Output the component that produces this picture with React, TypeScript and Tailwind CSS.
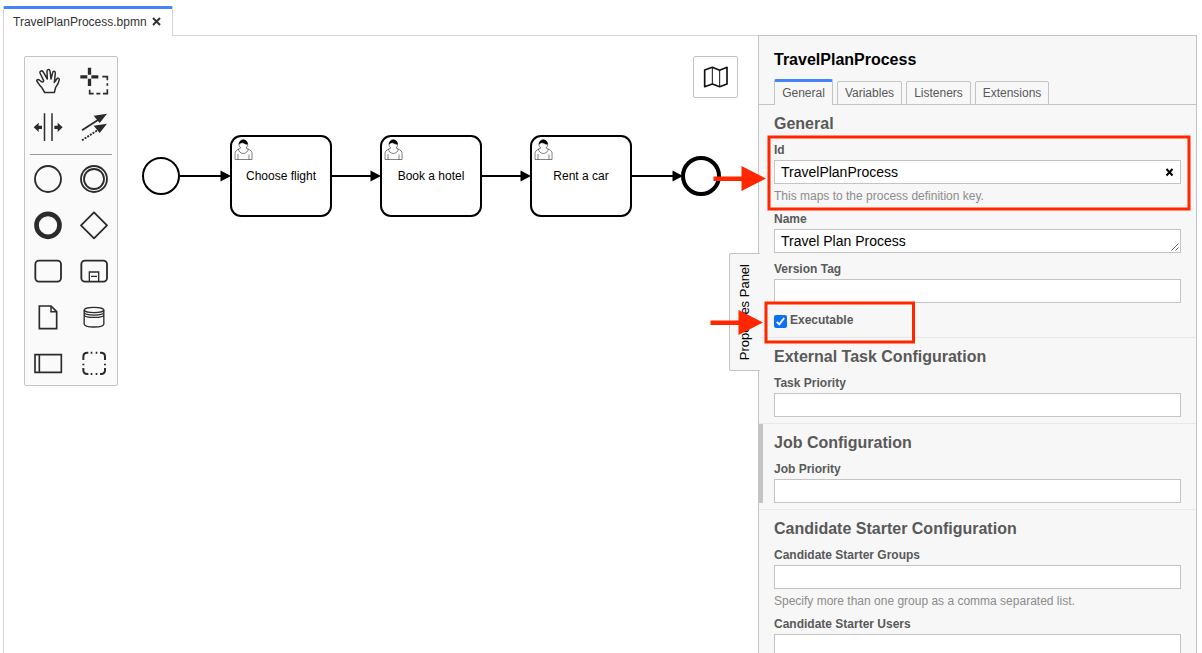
import type { ReactNode } from "react";

const INK = "#2b2b2b";

function Tool({ box, children }: { box: string; children: ReactNode }) {
  return (
    <button className="block size-[46px]">
      <svg className="size-[46px]" viewBox={box} fill="none" stroke={INK} strokeWidth="5.5">
        {children}
      </svg>
    </button>
  );
}

function Palette() {
  return (
    <div className="absolute left-5 top-5 h-[330px] w-[94px] overflow-hidden rounded-xs border border-[#c4c4c4] bg-[#fafafa] pt-[2px]">
      <div className="grid grid-cols-2">
        <Tool box="15 27 138 138">
          <path
            strokeWidth="4.5"
            strokeLinejoin="round"
            d="M74 127.500H103L107 112C113 104 117 95 118 89C118 83 112 83 110 88L103 97L106 69C106 62 99 62 98 68L93 87L90 63C89 56 81 57 81 64L82 87L69 65C65 60 58 64 60 69L71 92C69 99 65 96 58 90C53 87 48 90 51 94C56 100 58 107 65 112Z"
          />
        </Tool>
        <Tool box="153 27 138 138">
          <path strokeWidth="10" d="M181 80.500H202M214 80.500H235M208.500 53V74M208.500 86V108" />
          <path strokeWidth="5" d="M247 80H262V91M262 100V107M262 118V131H249M241 131H229M221 131H209V119" />
        </Tool>
        <Tool box="15 165 138 138">
          <path strokeWidth="4.5" d="M73.500 190V273M96 190V273" />
          <path fill={INK} stroke="none" d="M41 232L56 218V227H66V237H56V246ZM128 232L113 218V227H103V237H113V246Z" />
        </Tool>
        <Tool box="153 165 138 138">
          <path strokeWidth="5.5" d="M186 241L235 209" />
          <path strokeWidth="5.5" strokeDasharray="6 3.500" d="M186 271L235 239" />
          <path fill={INK} stroke="none" d="M261 191L221 197L239 219ZM261 221L221 227L239 249Z" />
        </Tool>
      </div>
      <hr className="mx-[5px] mb-px mt-[3px] border-[#999]" />
      <div className="grid grid-cols-2">
        <Tool box="15 3 138 138">
          <circle cx="84" cy="72" r="39" />
        </Tool>
        <Tool box="153 3 138 138">
          <circle cx="222" cy="72" r="39" />
          <circle cx="222" cy="72" r="30" />
        </Tool>
        <Tool box="15 141 138 138">
          <circle cx="84" cy="211" r="34.500" strokeWidth="14" />
        </Tool>
        <Tool box="153 141 138 138">
          <path strokeLinejoin="round" d="M222 172L261 211L222 250L183 211Z" />
        </Tool>
        <Tool box="15 -6 138 138">
          <rect x="46" y="32" width="77" height="63" rx="11" />
        </Tool>
        <Tool box="153 -6 138 138">
          <rect x="184" y="32" width="77" height="63" rx="11" />
          <path strokeWidth="4" d="M208 95V66H236V95M213 79H231" />
        </Tool>
        <Tool box="15 132 138 138">
          <path strokeWidth="5" d="M58 168H93L110 185V236H58Z" />
          <path strokeWidth="4.500" d="M93 168V185H110" />
        </Tool>
        <Tool box="153 132 138 138">
          <ellipse cx="222" cy="180" rx="29.500" ry="8" strokeWidth="4" />
          <path
            strokeWidth="4"
            d="M192.500 180V222C192.500 234 251.500 234 251.500 222V180M192.500 187C192.500 198 251.500 198 251.500 187M192.500 194C192.500 205 251.500 205 251.500 194"
          />
        </Tool>
        <Tool box="15 270 138 138">
          <path strokeWidth="5" d="M45 314H124V367H45ZM58 314V367" />
        </Tool>
        <Tool box="153 270 138 138">
          <path
            strokeWidth="6"
            d="M190 330V320Q190 308 202 308H205M212 308H217M227 308H232M240 308H243Q255 308 255 320V330M255 341V346M255 354V361Q255 372 243 372H240M232 372H227M217 372H212M205 372H202Q190 372 190 361V354M190 346V341"
          />
        </Tool>
      </div>
    </div>
  );
}

function Task({ x, label }: { x: number; label: string }) {
  return (
    <g transform={`translate(${x} 100)`}>
      <rect width="100" height="80" rx="10" fill="#fff" stroke="#000" strokeWidth="2" />
      <g stroke="#000" strokeWidth="0.5">
        <path
          fill="#fff"
          d="m15,12 c 0.909,-0.845 1.594,-2.049 1.594,-3.385 0,-2.554 -1.805,-4.622 -4.357,-4.622 -2.552,0 -4.288,2.068 -4.288,4.622 0,1.348 0.974,2.562 1.896,3.405 -0.529,0.187 -5.669,2.097 -5.794,4.756 v 6.718 h 17 v -6.718 c 0,-2.298 -5.528,-4.595 -6.051,-4.776 z m -8,6 l 0,5.500 m 11,0 l 0,-5"
        />
        <path fill="none" d="m15,12 m 2.162,1.009 c 0,2.447 -2.158,4.431 -4.821,4.431 -2.665,0 -4.822,-1.981 -4.822,-4.431" />
        <path
          fill="#000"
          d="m15,12 m -6.900,-3.800 c 0,0 2.251,-2.358 4.274,-1.177 2.024,1.181 4.221,1.537 4.124,0.965 -0.098,-0.570 -0.117,-3.791 -4.191,-4.136 -3.572,0 -4.208,4.117 -4.208,4.348 z"
        />
      </g>
      <text x="50" y="44" textAnchor="middle" fontSize="12">
        {label}
      </text>
    </g>
  );
}

function Flow({ from, to }: { from: number; to: number }) {
  return (
    <g>
      <path d={`M${from} 140H${to - 5}`} stroke="#000" strokeWidth="2" />
      <path d={`M${to} 140l-10.500 -5.500v11z`} />
    </g>
  );
}

function Diagram() {
  return (
    <svg className="block h-full w-full" viewBox="4 0 754 617">
      <Flow from={180} to={231} />
      <Flow from={332} to={381} />
      <Flow from={482} to={531} />
      <Flow from={632} to={683} />
      <circle cx="161" cy="140" r="18" fill="#fff" stroke="#000" strokeWidth="2" />
      <Task x={231} label="Choose flight" />
      <Task x={381} label="Book a hotel" />
      <Task x={531} label="Rent a car" />
      <circle cx="701" cy="140" r="18" fill="#fff" stroke="#000" strokeWidth="4" />
    </svg>
  );
}

function Label({ children }: { children: ReactNode }) {
  return <div className="mb-0.5 h-4 text-xs/4 font-bold">{children}</div>;
}

function Input({ value, clear, resize }: { value?: string; clear?: boolean; resize?: boolean }) {
  return (
    <div className="relative flex h-6 items-center justify-between border border-[#c4c4c4] bg-white pl-1.5 pr-[7px] text-sm text-black">
      <span>{value}</span>
      {clear && (
        <svg className="-mr-px size-[9px]" viewBox="0 0 9 9" stroke="#000" strokeWidth="2">
          <path d="M1.500 1L7.500 7.500M7.500 1L1.500 7.500" />
        </svg>
      )}
      {resize && (
        <svg className="absolute bottom-px right-px size-2" viewBox="0 0 8 8" stroke="#555" strokeWidth="0.9">
          <path d="M0.500 7.500L7.500 0.500M4.500 7.500L7.500 4.500" />
        </svg>
      )}
    </div>
  );
}

function Hint({ children }: { children: ReactNode }) {
  return <p className="mt-1 h-4 text-xs/4 text-[#8c8c8c]">{children}</p>;
}

function Group({ title, children }: { title: string; children: ReactNode }) {
  return (
    <section className="border-b border-[#e8e8e8] px-[15px] pb-1.5 pt-2.5">
      <h2 className="mb-[9px] text-base/[18px] font-bold">{title}</h2>
      {children}
    </section>
  );
}

function PanelTabs() {
  const tab = "-mb-px flex h-6 items-center justify-center rounded-t-xs border border-[#c4c4c4]";
  return (
    <div className="flex h-[26px] shrink-0 items-end gap-1 border-b border-[#c4c4c4] pl-[15px] text-xs">
      <div className="-mb-px flex h-[26px] w-[59px] items-center justify-center rounded-t-xs border-x border-t-[3px] border-x-[#c4c4c4] border-t-[#4483fa] bg-[#f7f7f7] pb-px">
        General
      </div>
      <div className={`${tab} w-[65px]`}>Variables</div>
      <div className={`${tab} w-[65px]`}>Listeners</div>
      <div className={`${tab} w-[74px]`}>Extensions</div>
    </div>
  );
}

function PropertiesPanel() {
  return (
    <aside className="relative flex w-[439px] shrink-0 flex-col border-x border-t border-[#c4c4c4] bg-[#f7f7f7] text-[#595959]">
      <div className="absolute -left-[30px] top-[217px] flex h-[118px] w-[31px] items-center justify-center rounded-l-xs border border-r-0 border-[#c4c4c4] bg-[#f7f7f7] text-[13px] text-black">
        <span className="rotate-180 whitespace-nowrap [writing-mode:vertical-rl]">Properties Panel</span>
      </div>
      <div className="absolute left-0 top-[388px] h-[79px] w-1 bg-[#c4c4c4]" />
      <h1 className="h-[43px] shrink-0 pl-[15px] pt-[13px] text-base/[22px] font-bold text-black">TravelPlanProcess</h1>
      <PanelTabs />
      <div className="min-h-0 flex-1 overflow-hidden">
        <Group title="General">
          <Label>Id</Label>
          <Input value="TravelPlanProcess" clear />
          <Hint>This maps to the process definition key.</Hint>
          <div className="mt-[7px]">
            <Label>Name</Label>
            <Input value="Travel Plan Process" resize />
          </div>
          <div className="mt-2">
            <Label>Version Tag</Label>
            <Input />
          </div>
          <div className="mb-[3px] mt-[9px] flex h-4 gap-[3px] text-xs/4 font-bold">
            <svg className="mt-[3px] size-[13px]" viewBox="0 0 13 13">
              <rect width="13" height="13" rx="2" fill="#0b72f5" />
              <path d="M2.800 6.800L5.300 9.400L10.200 3" fill="none" stroke="#fff" strokeWidth="1.900" />
            </svg>
            Executable
          </div>
        </Group>
        <Group title="External Task Configuration">
          <Label>Task Priority</Label>
          <Input />
        </Group>
        <Group title="Job Configuration">
          <Label>Job Priority</Label>
          <Input />
        </Group>
        <Group title="Candidate Starter Configuration">
          <Label>Candidate Starter Groups</Label>
          <Input />
          <Hint>Specify more than one group as a comma separated list.</Hint>
          <div className="mt-[7px]">
            <Label>Candidate Starter Users</Label>
            <Input />
          </div>
        </Group>
      </div>
    </aside>
  );
}

function Annotations() {
  return (
    <svg className="pointer-events-none absolute inset-0 h-[653px] w-[1202px]" viewBox="0 0 1202 653" fill="none">
      <g stroke="#ff2600" strokeWidth="3">
        <rect x="769" y="137" width="420" height="72" />
        <rect x="766" y="303" width="147.500" height="39" />
      </g>
      <g fill="#ff2600">
        <path d="M713.500 176.500H741.500V166L766 178.500L741.500 191V181H713.500Z" />
        <path d="M710.500 320.500H738.500V310L763 322.500L738.500 335V325H710.500Z" />
      </g>
    </svg>
  );
}

export default function App() {
  return (
    <div className="relative flex h-[653px] w-[1202px] flex-col overflow-hidden bg-white font-['Liberation_Sans',Arial,sans-serif]">
      <div className="flex h-[35px] shrink-0 items-end pl-[3px]">
        <div className="z-10 -mb-px flex h-[30px] w-[170px] items-center gap-1.5 rounded-t-xs border-x border-t-[3px] border-x-[#d4d4d4] border-t-[#4483fa] bg-white pb-px pl-[9px] text-xs text-[#333]">
          TravelPlanProcess.bpmn
          <svg className="-ml-px mb-px size-[9px]" viewBox="0 0 9 9" stroke="#333" strokeWidth="2">
            <path d="M1 1L8 8M8 1L1 8" />
          </svg>
        </div>
      </div>
      <div className="flex min-h-0 flex-1 pl-[3px]">
        <main className="relative w-[755px] shrink-0 border-l border-t border-[#d4d4d4]">
          <Diagram />
          <Palette />
          <button className="absolute left-[689px] top-5 h-[42px] w-[45px] rounded-xs border border-[#c4c4c4] bg-white">
            <svg className="-ml-px -mt-px h-[42px] w-[45px]" viewBox="39 78 135 126" fill="none" stroke="#111" strokeLinejoin="round">
              <path strokeWidth="5" d="M74 120L97 112L119 121L141 112V162L119 170L97 162L74 170Z" />
              <path strokeWidth="3" d="M97 112V162M119 121V170" />
            </svg>
          </button>
        </main>
        <PropertiesPanel />
      </div>
      <Annotations />
    </div>
  );
}
